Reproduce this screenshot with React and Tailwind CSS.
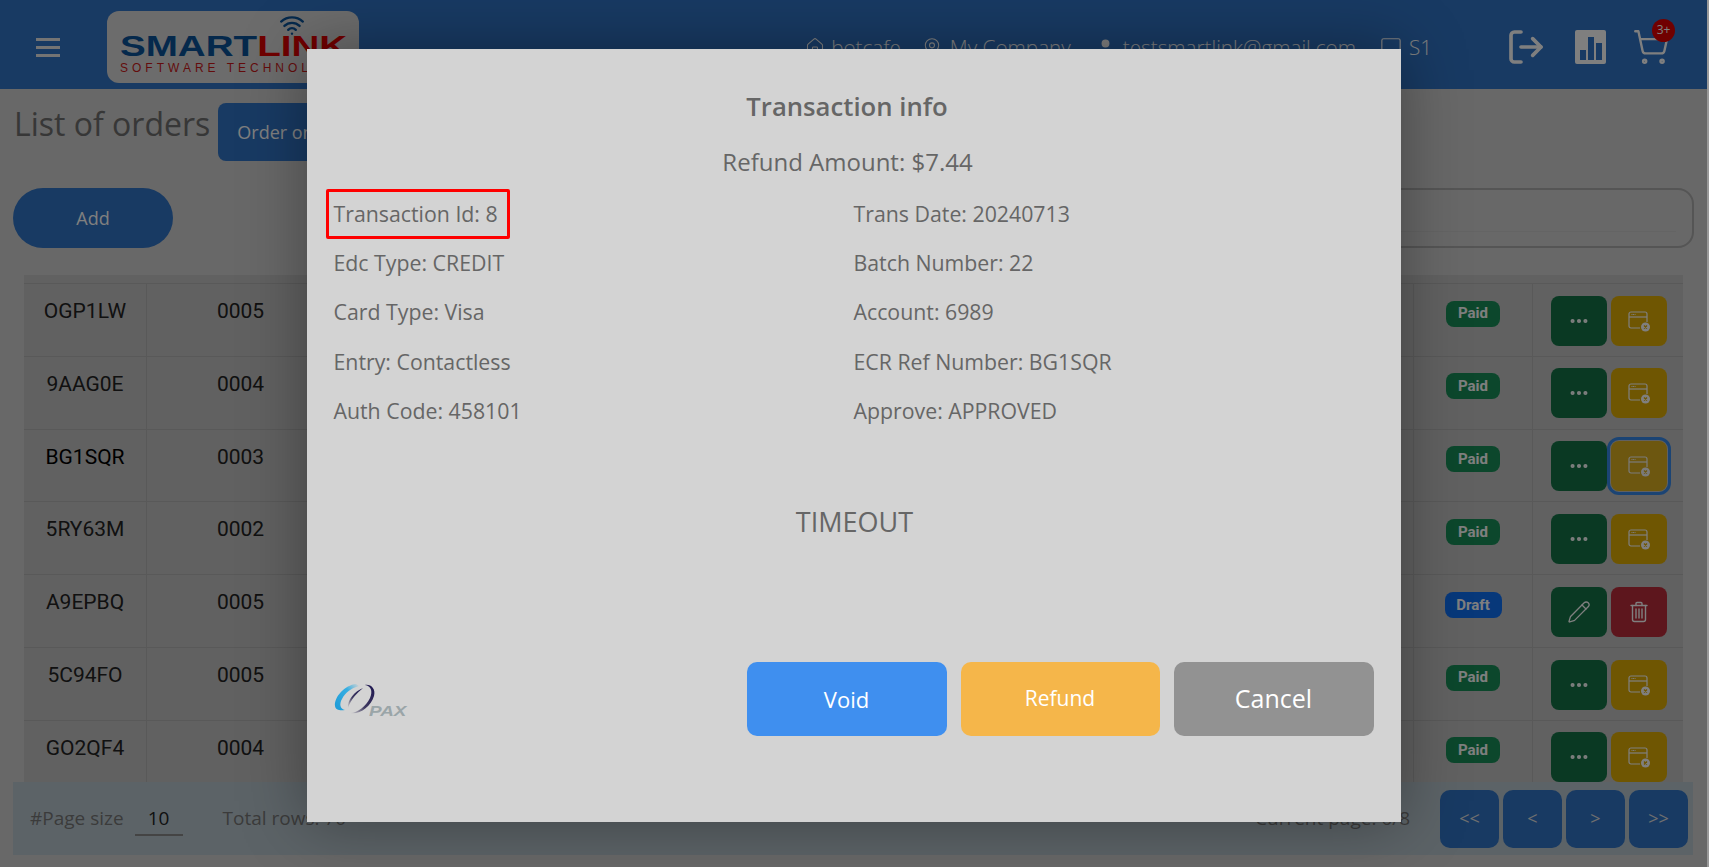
import { Home, MapPin, User, Monitor, LogOut, ShoppingCart, Wifi, Pencil, Ellipsis } from 'lucide-react'

const rows = [
  { code: 'OGP1LW', num: '0005', status: 'Paid' },
  { code: '9AAG0E', num: '0004', status: 'Paid' },
  { code: 'BG1SQR', num: '0003', status: 'Paid', focused: true },
  { code: '5RY63M', num: '0002', status: 'Paid' },
  { code: 'A9EPBQ', num: '0005', status: 'Draft' },
  { code: '5C94FO', num: '0005', status: 'Paid' },
  { code: 'GO2QF4', num: '0004', status: 'Paid' },
]

const details = [
  ['Transaction Id: 8', 'Trans Date: 20240713'],
  ['Edc Type: CREDIT', 'Batch Number: 22'],
  ['Card Type: Visa', 'Account: 6989'],
  ['Entry: Contactless', 'ECR Ref Number: BG1SQR'],
  ['Auth Code: 458101', 'Approve: APPROVED'],
]

function RefundIcon() {
  return (
    <svg width="24" height="24" viewBox="0 0 24 24" fill="none" stroke="white" strokeWidth="1.2">
      <path d="M13 19H4a2 2 0 0 1-2-2V5a2 2 0 0 1 2-2h14a2 2 0 0 1 2 2v8" />
      <path d="M2 8h18" />
      <path d="M4.5 5.5h4" strokeDasharray="1 0.6" />
      <circle cx="18.5" cy="18" r="4.5" fill="white" stroke="none" />
      <path d="M17 16.5l3 3M20 16.5l-3 3" stroke="#dfac04" strokeWidth="1.4" />
    </svg>
  )
}

function TrashIcon() {
  return (
    <svg width="20" height="22" viewBox="0 0 20 22" fill="none" stroke="white" strokeWidth="1.4" strokeLinecap="round">
      <path d="M2 4.5h16" />
      <path d="M7 4.5V2.5a1 1 0 0 1 1-1h4a1 1 0 0 1 1 1v2" />
      <path d="M3.5 4.5v14a2 2 0 0 0 2 2h9a2 2 0 0 0 2-2v-14" />
      <path d="M7 8v9M10 8v9M13 8v9" />
    </svg>
  )
}

function PaxLogo() {
  return (
    <div className="relative w-[74px] h-[33px]">
      <svg width="42" height="33" viewBox="0 0 42 33" fill="none">
        <defs>
          <linearGradient id="paxBlue" x1="0" y1="1" x2="1" y2="0">
            <stop offset="0" stopColor="#1c9ad6" />
            <stop offset="0.65" stopColor="#35aee2" />
            <stop offset="1" stopColor="#d3d3d3" />
          </linearGradient>
          <linearGradient id="paxDark" x1="1" y1="0" x2="0" y2="1">
            <stop offset="0" stopColor="#1d1650" />
            <stop offset="0.6" stopColor="#3f3960" />
            <stop offset="1" stopColor="#d3d3d3" />
          </linearGradient>
        </defs>
        <path d="M22 1C11 2 0 14 1 23c.5 4 5 5 10 4C6 26 5 21 8 16 11 10 17 5 25 3z" fill="url(#paxBlue)" />
        <path d="M31 2c6 1 8 6 5 13-4 8-12 15-20 15 9 2 21-6 24-17 2-7-3-12-9-11z" fill="url(#paxDark)" />
        <path d="M29 5c-8 3-16 12-15 20 3-9 9-15 15-20z" fill="url(#paxDark)" />
      </svg>
      <span className="absolute left-[35px] top-[21px] text-[14px] leading-[14px] font-bold italic text-[#9aa5a8] font-['Liberation_Sans',sans-serif] scale-x-[1.35] origin-left">PAX</span>
    </div>
  )
}

function OrderRow({ code, num, status, focused }) {
  const draft = status === 'Draft'
  return (
    <div className="grid grid-cols-[123px_187px_1fr_120px_150px] h-[72.8px] border-b border-[#b2b2b2] shrink-0">
      <div className={`border-r border-[#b2b2b2] pt-[15px] text-center text-[21px] leading-[24px] ${focused ? 'text-black' : 'text-[#222]'}`}>{code}</div>
      <div className="pt-[15px] text-center text-[21px] leading-[24px] text-[#222]">{num}</div>
      <div />
      <div className="border-x border-[#b2b2b2] pt-[16.7px] flex justify-center">
        <span className={`h-[26px] rounded-[8px] flex items-center justify-center text-[15px] font-bold text-white ${draft ? 'w-[57px] bg-[#0f70f5]' : 'w-[54px] bg-[#198f58]'}`}>{status}</span>
      </div>
      <div className="pt-[11.7px] pl-[18px] flex gap-[4px]">
        <button className="w-[56px] h-[50px] rounded-[8px] bg-[#157347] flex items-center justify-center text-white">
          {draft ? <Pencil size={24} strokeWidth={1.3} /> : <Ellipsis size={22} strokeWidth={2.5} />}
        </button>
        <button className={`w-[56px] h-[50px] rounded-[8px] flex items-center justify-center text-white ${draft ? 'bg-[#bb2d3b]' : 'bg-[#dfac04]'} ${focused ? 'outline-3 outline-offset-1 outline-[#1f7ff0] opacity-85' : ''}`}>
          {draft ? <TrashIcon /> : <RefundIcon />}
        </button>
      </div>
    </div>
  )
}

export default function App() {
  return (
    <div className="relative h-screen overflow-hidden flex flex-col bg-[#d0d0d0] border-r-2 border-[#999] font-['Open_Sans',sans-serif]">
      {/* Header */}
      <header className="h-[89px] shrink-0 bg-[#3074c6] text-white flex items-center pl-[36px] pr-[37px]">
        <div className="w-[24px] flex flex-col gap-[5px] mt-[6px]">
          <span className="h-[3px] bg-[#e8e8e8]" />
          <span className="h-[3px] bg-[#e8e8e8]" />
          <span className="h-[3px] bg-[#e8e8e8]" />
        </div>
        <div className="relative ml-[47px] w-[252px] h-[72px] mt-[4px] rounded-[12px] bg-[#d8d8d8] overflow-hidden">
          <Wifi size={26} strokeWidth={2.2} className="absolute left-[172px] top-[1px] text-[#0a5298]" />
          <div className="absolute left-[13px] top-[18px] flex text-[29px] leading-[34px] font-bold font-['Liberation_Sans',sans-serif] scale-x-[1.33] origin-left">
            <span className="text-[#0a5298]">SMART</span>
            <span className="text-[#e00000]">LINK</span>
          </div>
          <div className="absolute left-[13px] top-[50px] text-[12px] leading-[14px] tracking-[4px] whitespace-nowrap text-[#c81818] font-['Liberation_Sans',sans-serif]">SOFTWARE TECHNOLOGY</div>
        </div>
        <div className="ml-auto flex items-center text-[20.7px] text-white font-light pt-[6px]">
          <Home size={20} strokeWidth={1.3} />
          <span className="ml-[6px]">botcafe</span>
          <MapPin size={20} strokeWidth={1.3} className="ml-[21px]" />
          <span className="ml-[8px]">My Company</span>
          <User size={19} strokeWidth={2} fill="currentColor" className="ml-[25px]" />
          <span className="ml-[8px]">testsmartlink@gmail.com</span>
          <Monitor size={22} strokeWidth={1.3} className="ml-[24px]" />
          <span className="ml-[7px]">S1</span>
        </div>
        <div className="ml-[74px] flex items-center mt-[4px]">
          <LogOut size={40} strokeWidth={2.2} />
          <div className="ml-[29px] w-[31px] h-[34px] rounded-[2px] bg-white flex items-end justify-center gap-[2px] pb-[4px]">
            <span className="w-[6px] h-[10px] bg-[#3074c6]" />
            <span className="w-[6px] h-[23px] bg-[#3074c6]" />
            <span className="w-[6px] h-[17px] bg-[#3074c6]" />
          </div>
          <div className="relative ml-[26px]">
            <ShoppingCart size={38} strokeWidth={1.5} />
            <span className="absolute -top-[9px] left-[20px] w-[23px] h-[23px] rounded-full bg-[#e00000] flex items-center justify-center text-[12px] text-white">3+</span>
          </div>
        </div>
      </header>

      {/* Title */}
      <div className="mt-[14px] h-[58px] shrink-0 flex pl-[14px]">
        <h1 className="text-[32px] leading-[42px] text-[#6e6e6e]">List of orders</h1>
        <button className="ml-[8px] w-[300px] h-[58px] rounded-[8px] bg-[#3074c6] text-white text-[18px] text-left pl-[19px]">Order online</button>
      </div>

      {/* Toolbar */}
      <div className="mt-[27px] h-[60px] shrink-0 flex pl-[13px] pr-[13px]">
        <button className="w-[160px] h-[60px] rounded-full bg-[#3074c6] text-white text-[18px]">Add</button>
        <div className="ml-auto w-[700px] h-[60px] rounded-[16px] border-2 border-[#aaaaaa] px-[16px] pt-[41px]">
          <div className="border-b border-[#c8c8c8]" />
        </div>
      </div>

      {/* Table */}
      <div className="mt-[27px] ml-[24px] w-[1659px] h-[507px] shrink-0 overflow-hidden flex flex-col bg-[#c2c2c2] font-['Roboto',sans-serif]">
        <div className="h-[9px] shrink-0 border-b border-[#b2b2b2]" />
        {rows.map((r) => <OrderRow key={r.code} {...r} />)}
      </div>

      {/* Pagination */}
      <div className="ml-[13px] w-[1680px] h-[73px] shrink-0 bg-[#b9c7cf] flex items-center pl-[17px] pr-[5px] text-[19px] text-[#777]">
        <span>#Page size</span>
        <span className="ml-[11px] w-[48px] border-b-2 border-[#888] text-center text-[#222] leading-[32px]">10</span>
        <span className="ml-[40px]">Total rows: 70</span>
        <span className="ml-auto mr-[30px]">Current page: 6/8</span>
        <div className="flex gap-[4px] text-[#e0e0e0] text-[18px]">
          <button className="w-[59px] h-[58px] rounded-[10px] bg-[#3074c6]">&lt;&lt;</button>
          <button className="w-[59px] h-[58px] rounded-[10px] bg-[#3074c6]">&lt;</button>
          <button className="w-[59px] h-[58px] rounded-[10px] bg-[#3074c6]">&gt;</button>
          <button className="w-[59px] h-[58px] rounded-[10px] bg-[#3074c6]">&gt;&gt;</button>
        </div>
      </div>

      {/* Modal */}
      <div className="absolute inset-0 bg-black/50 flex justify-center items-start pt-[49px]">
        <div className="w-[1094px] h-[773px] bg-[#d3d3d3] text-[#666] flex flex-col shadow-[0_0_60px_rgba(0,0,0,0.35)]">
          <h2 className="mt-[40px] text-center text-[25.7px] leading-[36px] font-semibold -ml-[13px]">Transaction info</h2>
          <p className="mt-[21px] text-center text-[24px] leading-[32px] -ml-[12px]">Refund Amount: $7.44</p>
          <div className="mt-[11px] pl-[27px] grid grid-cols-[520px_1fr]">
            {details.flat().map((text, i) => (
              <div key={text} className="relative h-[49.3px] flex items-center text-[21.3px]">
                {text}
                {i === 0 && <span className="absolute -left-[8px] top-0 w-[184px] h-[50px] border-[3px] border-[#ff0000] rounded-[2px]" />}
              </div>
            ))}
          </div>
          <div className="mt-[69px] text-center text-[27px] leading-[36px] ml-[2px]">TIMEOUT</div>
          <div className="mt-auto mb-[86px] pl-[27px] pr-[27px] flex items-end">
            <div className="mb-[20px]"><PaxLogo /></div>
            <div className="ml-auto flex gap-[14px] text-white">
              <button className="w-[200px] h-[74px] rounded-[10px] bg-[#3f8fef] text-[22px]">Void</button>
              <button className="w-[199px] h-[74px] rounded-[10px] bg-[#f5b64a] text-[21px]">Refund</button>
              <button className="w-[200px] h-[74px] rounded-[10px] bg-[#929292] text-[25px]">Cancel</button>
            </div>
          </div>
        </div>
      </div>
    </div>
  )
}
